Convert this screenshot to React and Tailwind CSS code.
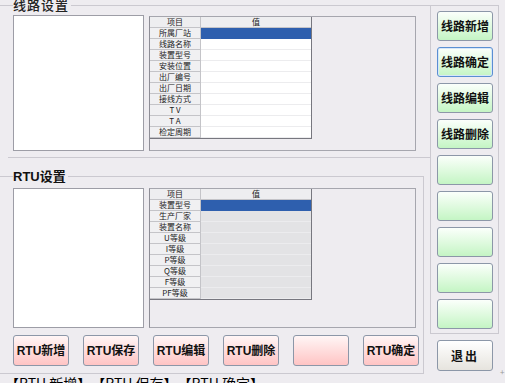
import React from "react";

const topRows = ["所属厂站", "线路名称", "装置型号", "安装位置", "出厂编号", "出厂日期", "接线方式", "T V", "T A", "检定周期"];
const rtuRows = ["装置型号", "生产厂家", "装置名称", "U等级", "I等级", "P等级", "Q等级", "F等级", "PF等级"];

function Grid({ rows, gray }) {
  return (
    <div className="w-[162px] border-r border-b border-[#77777f] bg-white text-[8px] leading-none text-[#222]">
      <div className="flex h-[11px]">
        <div className="w-[51px] flex items-center justify-center bg-[#eeeef0] border-r border-b border-[#c4c4c8]">项目</div>
        <div className="flex-1 flex items-center justify-center bg-[#eeeef0] border-b border-[#c4c4c8]">值</div>
      </div>
      {rows.map((r, i) => (
        <div key={r} className="flex h-[11px]">
          <div className="w-[51px] flex items-center justify-center bg-[#f0f0f2] border-r border-b border-[#c4c4c8]">{r}</div>
          <div
            className={
              i === 0
                ? "flex-1 bg-[#2e5fae] border-b border-[#2e5fae]"
                : gray
                ? "flex-1 bg-[#e3e3e5] border-b border-[#ececee]"
                : "flex-1 bg-white border-b border-[#ececee]"
            }
          />
        </div>
      ))}
    </div>
  );
}

function GreenBtn({ label, focus }) {
  return (
    <div
      className={
        focus
          ? "w-[56px] h-[30px] shrink-0 rounded-[3px] border border-[#5a8fd2] shadow-[inset_0_0_0_1px_#d6e6f8] bg-linear-to-b from-[#fbfffb] to-[#c4f5c4] flex items-center justify-center text-[12px] font-bold text-[#111]"
          : "w-[56px] h-[30px] shrink-0 rounded-[3px] border border-[#8c97a8] bg-linear-to-b from-[#fbfffb] to-[#c4f5c4] flex items-center justify-center text-[12px] font-bold text-[#111]"
      }
    >
      {label}
    </div>
  );
}

function PinkBtn({ label }) {
  return (
    <div className="w-[56px] h-[31px] shrink-0 rounded-[3px] border border-[#8c97a8] bg-linear-to-b from-[#fff6f6] to-[#ffc4c4] flex items-center justify-center text-[12px] font-bold text-[#111] font-['Liberation_Sans','Noto_Sans_CJK_SC',sans-serif]">
      {label}
    </div>
  );
}

export default function App() {
  return (
    <div className="w-[505px] h-[383px] overflow-hidden bg-[#eeecf0] relative font-['Noto_Sans_CJK_SC',sans-serif] text-[#111]">
      <div className="flex">
        {/* left column */}
        <div className="w-[430px] shrink-0">
          {/* 线路设置 group */}
          <div className="relative mt-[5px] h-[152px] border-t border-[#cbc9d0] pl-[13px] pt-[9px]">
            <span className="absolute left-[13px] top-[-9px] bg-[#eeecf0] pr-[2px] text-[13px] leading-[16px] tracking-[1px] font-medium text-[#222]">线路设置</span>
            <div className="flex gap-[5px]">
              <div className="w-[131px] h-[136px] bg-white border border-[#9d9da6]" />
              <div className="w-[267px] h-[135px] mt-[1px] border border-[#a6a6ae] border-l-[#8e8e96]">
                <Grid rows={topRows} />
              </div>
            </div>
          </div>
          {/* lower panel */}
          <div className="ml-[8px] h-[19px] border-t border-[#cbc9d0]" />
          {/* RTU group */}
          <div className="relative ml-[-1px] w-[425px] h-[198px] border-t border-r border-b border-[#cbc9d0] pl-[14px] pt-[11px]">
            <span className="absolute left-[14px] top-[-9px] bg-[#eeecf0] pr-[2px] text-[13px] leading-[16px] font-bold text-[#111]">
              <span className="font-['Liberation_Sans',sans-serif]">RTU</span>设置
            </span>
            <div className="flex gap-[5px]">
              <div className="w-[131px] h-[140px] bg-white border border-[#9d9da6]" />
              <div className="w-[267px] h-[140px] border border-[#a6a6ae] border-l-[#8e8e96]">
                <Grid rows={rtuRows} gray />
              </div>
            </div>
            <div className="flex gap-[14px] mt-[7px]">
              <PinkBtn label="RTU新增" />
              <PinkBtn label="RTU保存" />
              <PinkBtn label="RTU编辑" />
              <PinkBtn label="RTU删除" />
              <PinkBtn label="" />
              <PinkBtn label="RTU确定" />
            </div>
          </div>
        </div>
        {/* right column */}
        <div className="w-[69px] shrink-0 flex flex-col">
          <div className="mt-[5px] h-[329px] border border-[#cbc9d0] pl-[6px] pt-[5px] flex flex-col gap-[6px]">
            <GreenBtn label="线路新增" />
            <GreenBtn label="线路确定" focus />
            <GreenBtn label="线路编辑" />
            <GreenBtn label="线路删除" />
            <GreenBtn label="" />
            <GreenBtn label="" />
            <GreenBtn label="" />
            <GreenBtn label="" />
            <GreenBtn label="" />
          </div>
          <div className="mt-[6px] ml-[7px] w-[56px] h-[31px] rounded-[3px] border border-[#8c97a8] bg-linear-to-b from-white to-[#e6e4de] flex items-center justify-center text-[12px] font-bold tracking-[2px] text-[#111]">
            退出
          </div>
        </div>
      </div>
      <span className="absolute left-[500px] top-[368px] text-[8px] leading-none text-[#999]">+</span>
      <div className="pl-[5px] pt-[2px] text-[14px] leading-[14px] whitespace-nowrap text-black">
        【RTU 新增】、【RTU 保存】、【RTU 确定】
      </div>
    </div>
  );
}
